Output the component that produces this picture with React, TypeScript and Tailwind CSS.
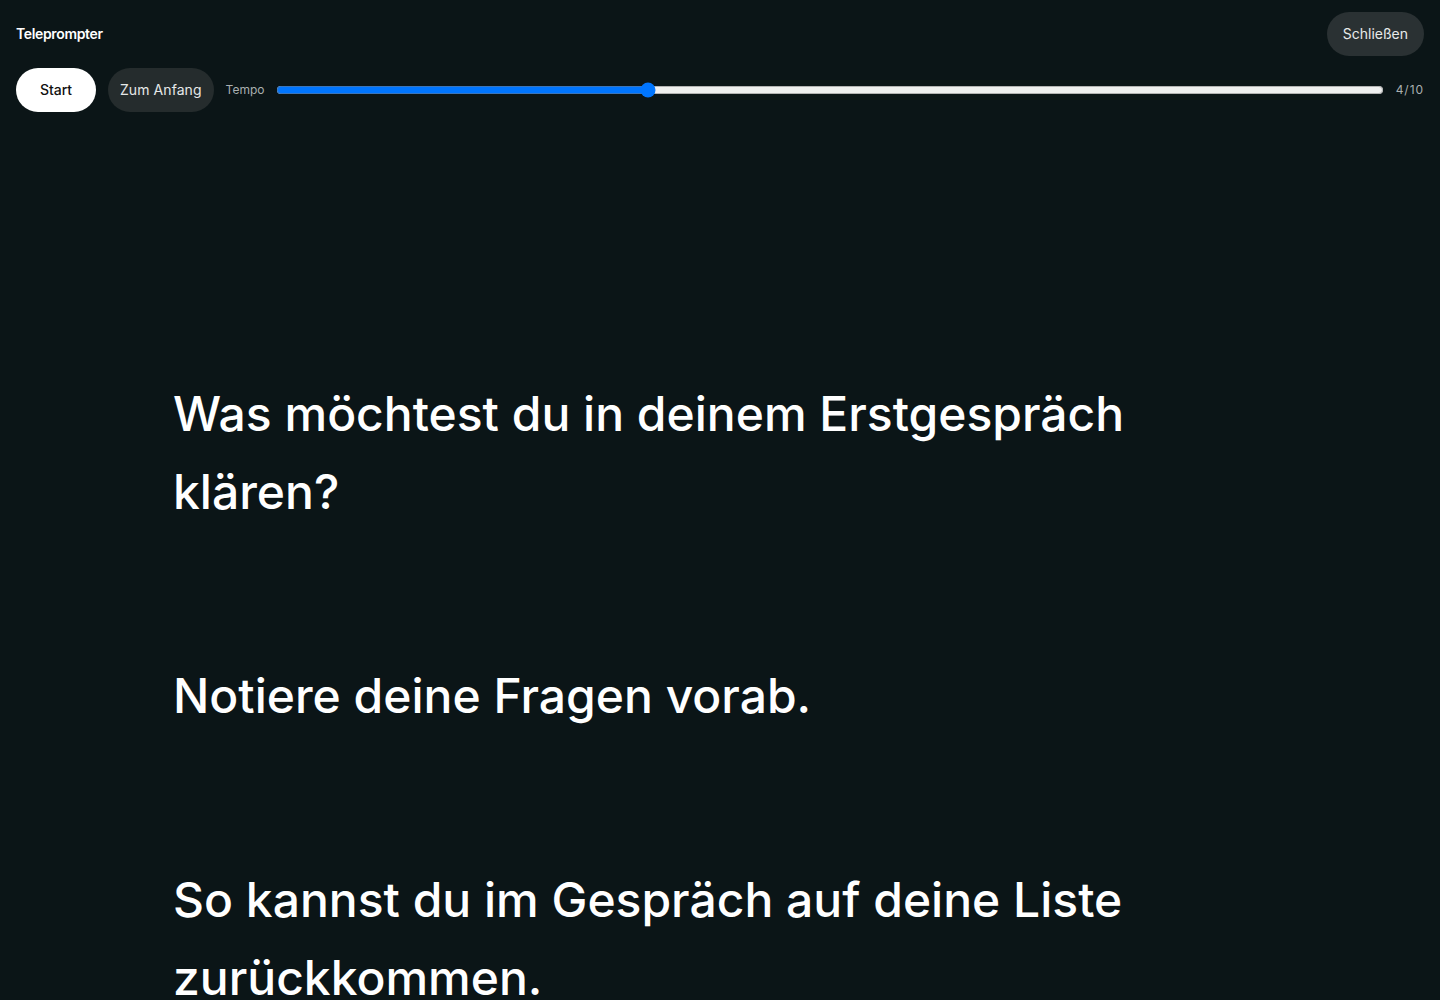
import React, {useState} from "react";

const paragraphs = [
  "Was möchtest du in deinem Erstgespräch klären?",
  "Notiere deine Fragen vorab.",
  "So kannst du im Gespräch auf deine Liste zurückkommen.",
];

export default function App() {
  const [speed, setSpeed] = useState(4);

  return (
    <div
      className="h-[1000px] overflow-hidden bg-[#0b1517] text-white"
      style={{fontFamily: "Inter, 'Noto Sans', sans-serif"}}
    >
      <header className="flex flex-col gap-3 px-4 pt-3">
        <div className="flex h-11 items-center justify-between">
          <span className="text-sm font-semibold tracking-[-0.025em]">Teleprompter</span>
          <button className="h-11 rounded-full bg-[#2a3133] px-4 text-sm text-[#e8eaea]">
            Schließen
          </button>
        </div>

        <div className="flex h-11 items-center gap-3">
          <button className="h-11 w-20 rounded-full bg-white text-sm font-medium text-[#111]">
            Start
          </button>
          <button className="h-11 rounded-full bg-[#252c2d] px-3 text-sm tracking-[0.005em] text-[#e6e8e8]">
            Zum Anfang
          </button>
          <span className="text-xs text-[#a9afb0]">Tempo</span>
          <input
            type="range"
            min={1}
            max={10}
            value={speed}
            onChange={(e) => setSpeed(Number(e.target.value))}
            className="flex-1"
          />
          <span className="text-xs tracking-[0.08em] text-[#a9afb0]">{speed}/10</span>
        </div>
      </header>

      <main className="mx-auto flex max-w-[1092px] flex-col gap-[126px] pt-[263px]">
        {paragraphs.map((p) => (
          <p key={p} className="-ml-px text-[48px] font-medium leading-[1.625] text-white">
            {p}
          </p>
        ))}
      </main>
    </div>
  );
}
